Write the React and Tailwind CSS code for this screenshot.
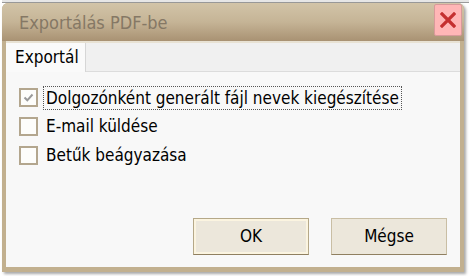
const font = { fontFamily: '"DejaVu Sans Condensed", "Liberation Sans", sans-serif' };

function Check({ checked }) {
  return (
    <span className="w-[19px] h-[19px] border-2 border-[#b3a68e] bg-[#fdfdfb] flex items-center justify-center shrink-0">
      {checked && (
        <svg width="13" height="13" viewBox="0 0 13 13">
          <path d="M2.5 6.5 L5.3 9.3 L10.5 3.5" fill="none" stroke="#9a9a9a" strokeWidth="2" />
        </svg>
      )}
    </span>
  );
}

export default function App() {
  return (
    <div className="w-[471px] h-[276px] bg-white overflow-hidden" style={font}>
      <div className="h-[3px] bg-[#e6e6e6] border-b border-[#9a9a9a] mx-[2px]" />
      <div className="ml-[2px] w-[462px] h-[269px] rounded-t-[6px] bg-[#c2b08f] flex flex-col px-[4px] pb-[5px] shadow-[2px_2px_3px_rgba(0,0,0,0.35)]">
        {/* title bar */}
        <div className="h-[38px] -mx-[4px] px-[17px] rounded-t-[6px] bg-gradient-to-b from-[#d2c4a8] via-[#c5b496] to-[#a99273] flex items-center justify-between">
          <span className="text-[18px] text-[#857865]">Exportálás PDF-be</span>
          <div className="w-[28px] h-[32px] -mr-[15px] -mt-[4px] bg-[#ffb6b6] border border-[#d89a9a] rounded-[2px] flex items-center justify-center">
            <svg width="16" height="16" viewBox="0 0 16 16">
              <path d="M2 2 L14 14 M14 2 L2 14" stroke="#c43030" strokeWidth="3.2" strokeLinecap="square" />
            </svg>
          </div>
        </div>
        {/* client area */}
        <div className="flex-1 bg-[#f8f8f8] border-t-2 border-[#e8e2d4] flex flex-col">
          <div className="h-[29px] bg-[#f0f0f0] flex items-end border-b border-[#dcdcdc]">
            <div className="h-[29px] w-[80px] bg-[#fafafa] border-r border-[#d6d6d6] flex items-center pl-[9px] -mb-px">
              <span className="text-[17px] text-black">Exportál</span>
            </div>
          </div>
          <div className="flex-1 flex flex-col pl-[13px] pt-[16px] gap-[10px] text-[17px] text-black">
            <div className="flex items-center gap-[8px] h-[19px]">
              <Check checked />
              <span className="-ml-[2px] px-[2px] leading-[22px] outline outline-1 outline-dotted outline-[#555]">Dolgozónként generált fájl nevek kiegészítése</span>
            </div>
            <div className="flex items-center gap-[8px] h-[19px]">
              <Check />
              <span>E-mail küldése</span>
            </div>
            <div className="flex items-center gap-[8px] h-[19px]">
              <Check />
              <span>Betűk beágyazása</span>
            </div>
          </div>
          <div className="flex justify-end gap-[22px] pr-[13px] pb-[12px]">
            <button className="w-[116px] h-[37px] bg-[#ece7db] border border-[#b5a888] border-b-[#8f7f60] shadow-[inset_0_0_0_2px_#fbf4e0] text-[17px] text-black">
              OK
            </button>
            <button className="w-[116px] h-[37px] bg-[#ece7db] border border-[#c9bea4] border-b-[#8f7f60] text-[17px] text-black">
              Mégse
            </button>
          </div>
        </div>
      </div>
    </div>
  );
}
